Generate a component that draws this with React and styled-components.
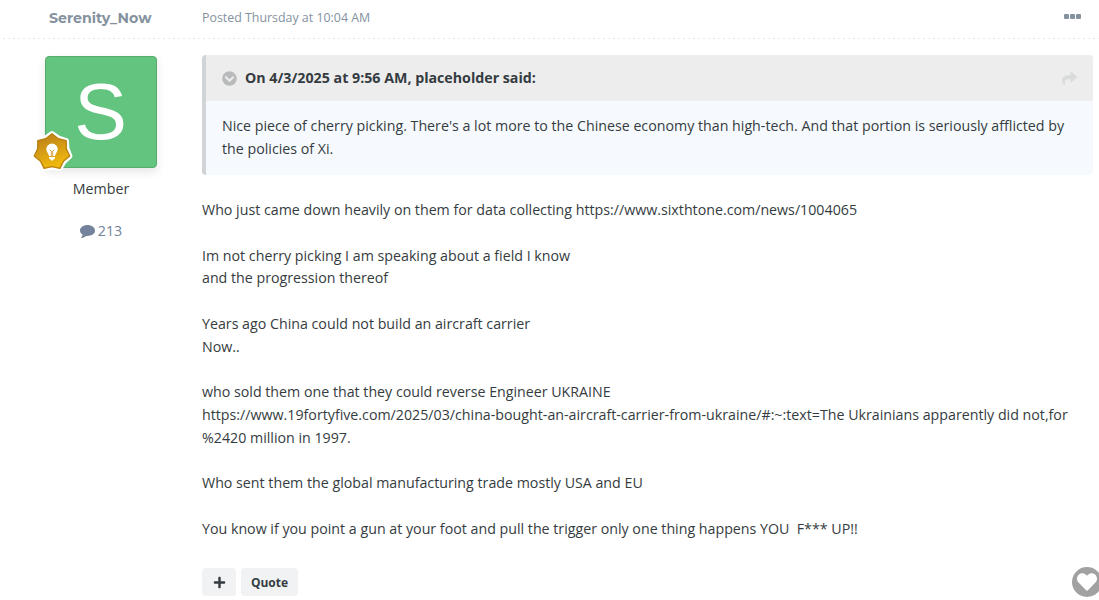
import styled, { createGlobalStyle } from "styled-components";
import { FaChevronCircleDown, FaHeart, FaPlus, FaShare } from "react-icons/fa";

const paragraphs = [
  ["Who just came down heavily on them for data collecting https://www.sixthtone.com/news/1004065"],
  ["Im not cherry picking I am speaking about a field I know", "and the progression thereof"],
  ["Years ago China could not build an aircraft carrier", "Now.."],
  [
    "who sold them one that they could reverse Engineer UKRAINE",
    "https://www.19fortyfive.com/2025/03/china-bought-an-aircraft-carrier-from-ukraine/#:~:text=The Ukrainians apparently did not,for",
    "%2420 million in 1997.",
  ],
  ["Who sent them the global manufacturing trade mostly USA and EU"],
  ["You know if you point a gun at your foot and pull the trigger only one thing happens YOU\u00a0 F*** UP!!"],
];

const starPoints = (outer, inner) =>
  Array.from({ length: 14 }, (_, i) => {
    const r = i % 2 ? inner : outer;
    const a = (i * Math.PI) / 7;
    return `${20 + r * Math.sin(a)},${20 - r * Math.cos(a)}`;
  }).join(" ");

const RankBadge = () => (
  <Badge width="40" height="40" viewBox="0 0 40 40">
    <defs>
      <linearGradient id="gold" x1="0" y1="0" x2="0.35" y2="1">
        <stop offset="0" stopColor="#b7791a" />
        <stop offset="1" stopColor="#efb90f" />
      </linearGradient>
    </defs>
    <polygon points={starPoints(18.4, 15.4)} fill="#fff" stroke="#fff" strokeWidth="5" strokeLinejoin="round" />
    <polygon points={starPoints(18.2, 14.7)} fill="url(#gold)" stroke="#b9810e" strokeWidth="1.3" strokeLinejoin="round" />
    <path
      d="M20 11.5a5.7 5.7 0 0 0-5.7 5.7c0 2.8 2.2 3.8 2.7 6.8h6c.5-3 2.7-4 2.7-6.8a5.7 5.7 0 0 0-5.7-5.7z"
      fill="#fff"
    />
    <path d="M17 25h6v1.6l-1.6 1-.6 1h-1.6l-.6-1-1.6-1z" fill="#fff" />
    <path d="M17.7 18l1.6 1v5M22.3 18l-1.6 1v5" fill="none" stroke="#c98d14" strokeWidth=".8" />
  </Badge>
);

const App = () => {
  return (
    <>
      <GlobalStyle />
      <Post>
        <Header>
          <UserName>Serenity_Now</UserName>
          <Posted>Posted Thursday at 10:04 AM</Posted>
          <Dots>
            <i />
            <i />
            <i />
          </Dots>
        </Header>
        <Body>
          <Author>
            <Avatar>
              <svg width="112" height="112" viewBox="0 0 112 112">
                <text x="55.5" y="82.5" textAnchor="middle" fontFamily="Liberation Sans, sans-serif" fontSize="79" fill="#fff">
                  S
                </text>
              </svg>
              <RankBadge />
            </Avatar>
            <Group>Member</Group>
            <Count>
              <svg width="15" height="13" viewBox="0 0 15 13">
                <path
                  d="M7.5 0C3.4 0 0 2.4 0 5.5c0 1.8 1.1 3.3 2.8 4.3-.3 1-.8 1.7-1.5 2.3-.3.3-.1.8.3.8 1.7-.2 3.3-.9 4.4-2 5 .5 9-1.900 9-5.400C15 2.400 11.600 0 7.500 0z"
                  fill="currentColor"
                />
              </svg>
              <span>213</span>
            </Count>
          </Author>
          <Content>
            <Quote>
              <QuoteHead>
                <FaChevronCircleDown className="toggle" size={15} />
                <span>On 4/3/2025 at 9:56 AM, placeholder said:</span>
                <FaShare className="share" size={15} />
              </QuoteHead>
              <QuoteText>
                Nice piece of cherry picking. There's a lot more to the Chinese economy than high-tech. And that portion is seriously afflicted by
                <br />
                the policies of Xi.
              </QuoteText>
            </Quote>
            <Message>
              {paragraphs.map((lines) => (
                <p key={lines[0]}>
                  {lines.map((line) => (
                    <span key={line}>{line}</span>
                  ))}
                </p>
              ))}
            </Message>
            <Controls>
              <Button $width={34}>
                <FaPlus size={13} />
              </Button>
              <Button $width={57}>Quote</Button>
              <Like>
                <FaHeart size={20} />
              </Like>
            </Controls>
          </Content>
        </Body>
      </Post>
    </>
  );
};

export default App;

const GlobalStyle = createGlobalStyle`
  * {
    box-sizing: border-box;
  }

  body {
    margin: 0;
    overflow: hidden;
    background: #fff;
    color: #353c41;
    font-family: "Open Sans", sans-serif;
    font-size: 14.22px;
    line-height: 22.75px;
  }
`;

const Post = styled.article`
  width: 1099px;
  height: 600px;
  overflow: hidden;
`;

const Header = styled.header`
  height: 39px;
  margin-left: 3px;
  padding: 0 18px 3px 0;
  display: flex;
  align-items: center;
  background: repeating-linear-gradient(90deg, #e4e6e8 0 2px, transparent 2px 5px) bottom / 100% 1px no-repeat;
`;

const UserName = styled.h3`
  width: 199px;
  margin: 0;
  padding-left: 46px;
  color: #84919e;
  font-family: Montserrat, Inter, sans-serif;
  font-size: 14.2px;
  font-weight: 700;
  white-space: nowrap;
`;

const Posted = styled.span`
  padding-top: 1px;
  color: #84919e;
  font-size: 12.4px;
  white-space: nowrap;
`;

const Dots = styled.div`
  margin-left: auto;
  padding-bottom: 4px;
  display: flex;
  gap: 1.5px;

  i {
    width: 4.6px;
    height: 5px;
    border-radius: 1px;
    background: #84919e;
  }
`;

const Body = styled.div`
  display: flex;
`;

const Author = styled.aside`
  width: 202px;
  padding: 17px 0 0 45px;
  flex: none;
`;

const Avatar = styled.div`
  position: relative;
  width: 112px;
  height: 112px;
  border: 1px solid #57ab6f;
  border-radius: 4px;
  background: #63c47f;
  box-shadow: 0 4px 10px rgba(0, 0, 0, 0.1);

  svg {
    display: block;
    margin: -1px;
  }
`;

const Badge = styled.svg`
  position: absolute;
  left: -13px;
  top: 76px;
  overflow: visible;
`;

const Group = styled.div`
  width: 112px;
  margin-top: 10px;
  text-align: center;
`;

const Count = styled.div`
  width: 112px;
  margin-top: 19px;
  display: flex;
  align-items: center;
  justify-content: center;
  gap: 3px;
  color: #74839b;
`;

const Content = styled.section`
  width: 891px;
  padding-top: 16px;
`;

const Quote = styled.blockquote`
  height: 120px;
  margin: 0;
  border-left: 4px solid #d0d4d6;
  border-radius: 4px;
  background: #f6fafe;
  overflow: hidden;
`;

const QuoteHead = styled.div`
  height: 46px;
  padding: 0 16px;
  display: flex;
  align-items: center;
  background: #ededed;
  font-weight: 700;
  white-space: nowrap;

  .toggle {
    margin-right: 8px;
    color: #b8babb;
  }

  .share {
    margin-left: auto;
    color: #dadcdc;
  }
`;

const QuoteText = styled.div`
  padding: 14px 16px;
  white-space: nowrap;
`;

const Message = styled.div`
  padding-top: 24px;
  white-space: nowrap;

  p {
    margin: 0 0 22.75px;
  }

  span {
    display: block;
  }
`;

const Controls = styled.div`
  height: 28px;
  margin: 28.2px -9px 0 0;
  display: flex;
  align-items: center;
  gap: 5px;
`;

const Button = styled.button`
  width: ${({ $width }) => $width}px;
  height: 28px;
  padding: 0;
  display: flex;
  align-items: center;
  justify-content: center;
  border: 0;
  border-radius: 4px;
  background: #f1f2f4;
  color: #353c41;
  font-family: inherit;
  font-size: 12px;
  font-weight: 700;
`;

const Like = styled.div`
  width: 30px;
  height: 30px;
  margin-left: auto;
  display: flex;
  align-items: center;
  justify-content: center;
  flex: none;
  border-radius: 50%;
  background: #a1a1a1;
  color: #fff;
`;
